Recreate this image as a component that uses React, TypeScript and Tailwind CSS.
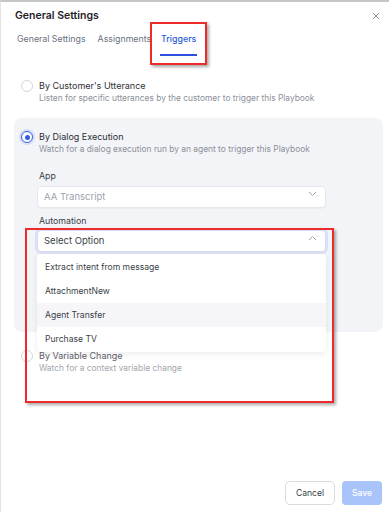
import React from "react";

function Radio({ checked }: { checked?: boolean }) {
  if (checked) {
    return (
      <span className="flex h-[12px] w-[12px] shrink-0 items-center justify-center rounded-full border-[1.5px] border-[#2f5fe3] bg-white shadow-[0_0_0_2px_rgba(59,100,240,0.15)]">
        <span className="block h-[5px] w-[5px] rounded-full bg-[#2f5fe3]" />
      </span>
    );
  }
  return <span className="block h-[12px] w-[12px] shrink-0 rounded-full border border-[#d4d6dc] bg-white" />;
}

function Chevron({ up }: { up?: boolean }) {
  return (
    <svg width="9" height="6" viewBox="0 0 9 6" fill="none" className="shrink-0">
      <path d={up ? "M1 5 L4.5 1.5 L8 5" : "M1 1 L4.5 4.5 L8 1"} stroke="#9ca3af" strokeWidth="1" />
    </svg>
  );
}

export default function App() {
  const items = ["Extract intent from message", "AttachmentNew", "Agent Transfer", "Purchase TV"];
  return (
    <div
      className="relative flex h-[512px] w-[389px] flex-col overflow-hidden border-t-2 border-l border-t-[#c6c6c6] border-l-[#e3e3e3] bg-white"
      style={{ fontFamily: "Inter, 'Noto Sans', sans-serif" }}
    >
      {/* Header */}
      <div className="flex items-center justify-between pl-[14px] pr-[9px] pt-[7px]">
        <div className="text-[10.5px] font-semibold leading-[14px] text-[#1f2328]">General Settings</div>
        <svg width="8" height="8" viewBox="0 0 8 8">
          <path d="M1 1 L7 7 M7 1 L1 7" stroke="#8a8f98" strokeWidth="1" />
        </svg>
      </div>

      {/* Tabs */}
      <div className="relative flex pl-[16px] text-[8.8px] leading-[12px]">
        <div className="pt-[10px] pb-[9px] text-[#6b7280]">General Settings</div>
        <div className="ml-[12px] pt-[10px] pb-[9px] text-[#6b7280]">Assignments</div>
        <div className="ml-[7px] flex flex-col items-center">
          <div className="px-[3px] pt-[10px] pb-[9px] font-medium text-[#2d5bd8]">Triggers</div>
          <div className="h-[2px] w-[37px] bg-[#2d4fe0]" />
        </div>
        {/* annotation box 1 */}
        <div className="absolute left-[149px] top-[-1px] h-[43px] w-[57px] border-2 border-[#ee2b2b] shadow-[2px_2px_3px_rgba(0,0,0,0.35)]" />
      </div>

      {/* Content */}
      <div className="flex flex-col pl-[13px] pr-[6px] pt-[24px]">
        {/* Option 1 */}
        <div className="flex gap-[6px] px-[7px]">
          <div>
            <Radio />
          </div>
          <div className="flex flex-col">
            <div className="text-[9px] leading-[12px] text-[#2b2f36]">By Customer's Utterance</div>
            <div className="text-[8.4px] leading-[12px] text-[#8b9099]">
              Listen for specific utterances by the customer to trigger this Playbook
            </div>
          </div>
        </div>

        {/* Option 2 panel */}
        <div className="mt-[14px] rounded-[8px] bg-[#f3f4f7] px-[7px] pt-[13px] pb-[80px]">
          <div className="flex gap-[6px]">
            <div>
              <Radio checked />
            </div>
            <div className="flex flex-1 flex-col">
              <div className="text-[9px] leading-[12px] text-[#2b2f36]">By Dialog Execution</div>
              <div className="text-[8.4px] leading-[12px] text-[#8b9099]">
                Watch for a dialog execution run by an agent to trigger this Playbook
              </div>

              <div className="mt-[15px] text-[8.8px] leading-[12px] text-[#3a3f47]">App</div>
              <div className="ml-[-2px] mt-[4px] flex h-[22px] w-[289px] items-center justify-between rounded-[4px] border border-[#e6e7eb] bg-white pl-[6px] pr-[8px] shadow-[0_1px_1px_rgba(0,0,0,0.03)]">
                <span className="text-[9.5px] text-[#9ca3af]">AA Transcript</span>
                <span className="-mt-[6px]">
                  <Chevron />
                </span>
              </div>

              <div className="mt-[7px] text-[8.8px] leading-[12px] text-[#3a3f47]">Automation</div>
              <div className="relative ml-[-2px] mt-[3px] w-[289px]">
                <div className="flex h-[22px] w-[289px] items-center justify-between rounded-[4px] border border-[#d9dcf5] bg-white pl-[6px] pr-[8px] shadow-[0_0_0_2px_rgba(120,130,240,0.18)]">
                  <span className="text-[9.5px] text-[#3a3f47]">Select Option</span>
                  <span className="-mt-[6px]">
                    <Chevron up />
                  </span>
                </div>
                {/* dropdown */}
                <div className="absolute left-0 top-[24px] z-10 flex w-[289px] flex-col rounded-[4px] bg-white py-[1px] shadow-[0_2px_6px_rgba(0,0,0,0.08)]">
                  {items.map((it, i) => (
                    <div
                      key={it}
                      className={`flex h-[24px] items-center pl-[8px] text-[8.6px] text-[#3a3f47] ${i === 2 ? "bg-[#f6f6f8]" : ""}`}
                    >
                      {it}
                    </div>
                  ))}
                </div>
              </div>
            </div>
          </div>
        </div>

        {/* Option 3 */}
        <div className="mt-[18px] flex gap-[6px] px-[7px]">
          <div>
            <Radio />
          </div>
          <div className="flex flex-col">
            <div className="text-[9px] leading-[12px] text-[#5d626b]">By Variable Change</div>
            <div className="text-[8.4px] leading-[12px] text-[#a3a7ae]">Watch for a context variable change</div>
          </div>
        </div>
      </div>

      {/* annotation box 2 */}
      <div className="absolute left-[24px] top-[226px] z-20 h-[175px] w-[309px] border-2 border-[#ee2b2b] shadow-[2px_2px_3px_rgba(0,0,0,0.35)]" />

      {/* Footer */}
      <div className="mt-auto flex justify-end gap-[7px] pb-[7px] pr-[7px]">
        <button className="flex h-[24px] w-[50px] items-center justify-center rounded-[5px] border border-[#d8dade] bg-white text-[8.6px] text-[#3a3f47]">
          Cancel
        </button>
        <button className="flex h-[24px] w-[40px] items-center justify-center rounded-[4px] bg-[#a9c4fb] text-[8.6px] font-medium text-white">
          Save
        </button>
      </div>
    </div>
  );
}
